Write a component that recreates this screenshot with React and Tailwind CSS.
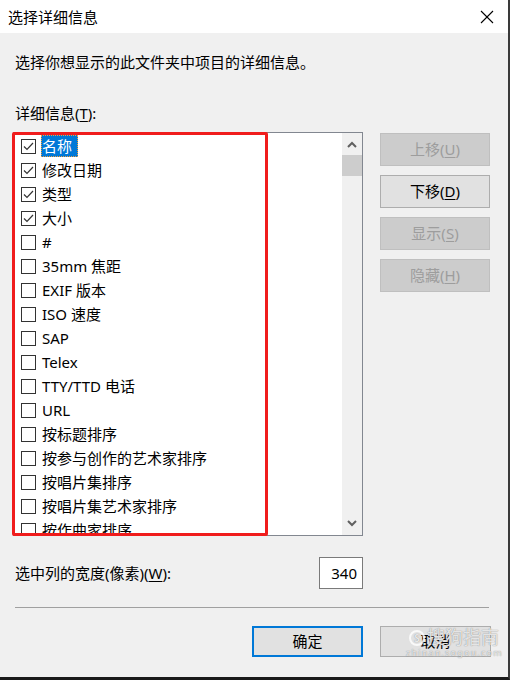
import React from "react";

const items = [
  { t: "名称", c: true, sel: true },
  { t: "修改日期", c: true },
  { t: "类型", c: true },
  { t: "大小", c: true },
  { t: "#" },
  { t: "35mm 焦距" },
  { t: "EXIF 版本" },
  { t: "ISO 速度" },
  { t: "SAP" },
  { t: "Telex" },
  { t: "TTY/TTD 电话" },
  { t: "URL" },
  { t: "按标题排序" },
  { t: "按参与创作的艺术家排序" },
  { t: "按唱片集排序" },
  { t: "按唱片集艺术家排序" },
  { t: "按作曲家排序" },
];

function Check({ on }) {
  return (
    <div className="w-[15px] h-[15px] border border-[#333333] bg-white flex items-center justify-center shrink-0">
      {on && (
        <svg width="11" height="9" viewBox="0 0 11 9">
          <polyline points="1,4.5 4,7.5 10,1" fill="none" stroke="#333333" strokeWidth="1.2" />
        </svg>
      )}
    </div>
  );
}

function SideBtn({ label, k, enabled }) {
  return (
    <div
      className={
        "w-[110px] h-[33px] border flex items-center justify-center text-[15px] " +
        (enabled
          ? "bg-[#e1e1e1] border-[#adadad] text-black"
          : "bg-[#cccccc] border-[#bfbfbf] text-[#9d9d9d]")
      }
    >
      <span>
        {label}(<span className="underline underline-offset-2">{k}</span>)
      </span>
    </div>
  );
}

export default function App() {
  return (
    <div className="w-[510px] h-[680px] flex flex-col bg-[#f0f0f0] border-r-2 border-r-[#3a3a3a] border-b-[3px] border-b-[#1a1a1a] text-black font-['Noto_Sans','Noto_Sans_CJK_SC',sans-serif] overflow-hidden">
      {/* title bar */}
      <div className="h-[33px] bg-white flex items-center justify-between shrink-0">
        <span className="pl-[8px] text-[15px] leading-[20px]">选择详细信息</span>
        <svg width="14" height="14" viewBox="0 0 14 14" className="mr-[14px]">
          <line x1="1" y1="1" x2="13" y2="13" stroke="#000" strokeWidth="1.1" />
          <line x1="13" y1="1" x2="1" y2="13" stroke="#000" strokeWidth="1.1" />
        </svg>
      </div>

      <div className="flex-1 flex flex-col">
        <div className="mt-[19px] h-[20px] leading-[20px] pl-[15px] text-[15px]">
          选择你想显示的此文件夹中项目的详细信息。
        </div>
        <div className="mt-[31px] h-[20px] leading-[20px] pl-[15px] text-[15px]">
          详细信息(<span className="underline underline-offset-2">T</span>):
        </div>

        <div className="mt-[9px] flex items-start">
          {/* list */}
          <div className="relative ml-[13px] w-[350px] h-[404px] border border-[#828790] bg-white flex">
            <div className="flex-1 overflow-hidden pt-[1px]">
              {items.map((it, i) => (
                <div key={i} className="h-[24px] flex items-center pl-[7px]">
                  <Check on={it.c} />
                  <div
                    className={
                      "ml-[5px] h-[22px] flex items-center pl-[1px] pr-[6px] text-[15px] whitespace-nowrap " +
                      (it.sel ? "bg-[#0078d7] text-white outline outline-1 outline-dotted outline-[#f0a040] -outline-offset-1" : "")
                    }
                  >
                    {it.t}
                  </div>
                </div>
              ))}
            </div>
            {/* scrollbar */}
            <div className="w-[20px] bg-[#f0f0f0] flex flex-col items-center">
              <div className="h-[22px] flex items-center justify-center">
                <svg width="10" height="7" viewBox="0 0 10 7">
                  <polyline points="1,6 5,2 9,6" fill="none" stroke="#606060" strokeWidth="2" />
                </svg>
              </div>
              <div className="w-full h-[21px] bg-[#cdcdcd]" />
              <div className="flex-1" />
              <div className="h-[24px] flex items-center justify-center">
                <svg width="10" height="7" viewBox="0 0 10 7">
                  <polyline points="1,1 5,5 9,1" fill="none" stroke="#606060" strokeWidth="2" />
                </svg>
              </div>
            </div>
            {/* red highlight frame */}
            <div className="absolute left-[-2px] top-[-1px] w-[256px] h-[404px] border-[3px] border-[#f01c1c] rounded-[2px] pointer-events-none" />
          </div>

          {/* side buttons */}
          <div className="ml-[17px] mt-[1px] flex flex-col gap-[9px]">
            <SideBtn label="上移" k="U" />
            <SideBtn label="下移" k="D" enabled />
            <SideBtn label="显示" k="S" />
            <SideBtn label="隐藏" k="H" />
          </div>
        </div>

        <div className="mt-[21px] flex items-center">
          <div className="pl-[15px] w-[319px] text-[15px] leading-[20px]">
            选中列的宽度(像素)(<span className="underline underline-offset-2">W</span>):
          </div>
          <div className="w-[44px] h-[32px] bg-white border border-[#7a7a7a] flex items-center justify-end pr-[5px] text-[15px]">
            340
          </div>
        </div>

        <div className="mt-[18px] ml-[15px] w-[474px] h-[1px] bg-[#a0a0a0]" />

        <div className="mt-[18px] flex">
          <div className="ml-[252px] w-[111px] h-[31px] bg-[#e1e1e1] border-2 border-[#0078d7] flex items-center justify-center text-[15px]">
            确定
          </div>
          <div className="relative ml-[17px] w-[111px] h-[31px] bg-[#e1e1e1] border border-[#adadad] flex items-center justify-center text-[15px]">
            取消
            <div className="absolute left-[28px] top-[0px] flex flex-col items-start pointer-events-none">
              <div className="flex items-center h-[21px]">
                <div className="w-[16px] h-[16px] rounded-full border-2 border-white/80 flex items-center justify-center text-[10px] font-bold text-white/80 leading-none [text-shadow:0_0_1px_#777]">
                  S
                </div>
                <span className="ml-[2px] text-[18px] leading-[21px] text-white/80 [text-shadow:0_0_1px_#666]">
                  搜狗指南
                </span>
              </div>
              <span className="-ml-[3px] text-[9px] leading-[10px] tracking-[1.2px] text-white/80 [text-shadow:0_0_1px_#666]">
                zhinan.sogou.com
              </span>
            </div>
          </div>
        </div>
      </div>
    </div>
  );
}
